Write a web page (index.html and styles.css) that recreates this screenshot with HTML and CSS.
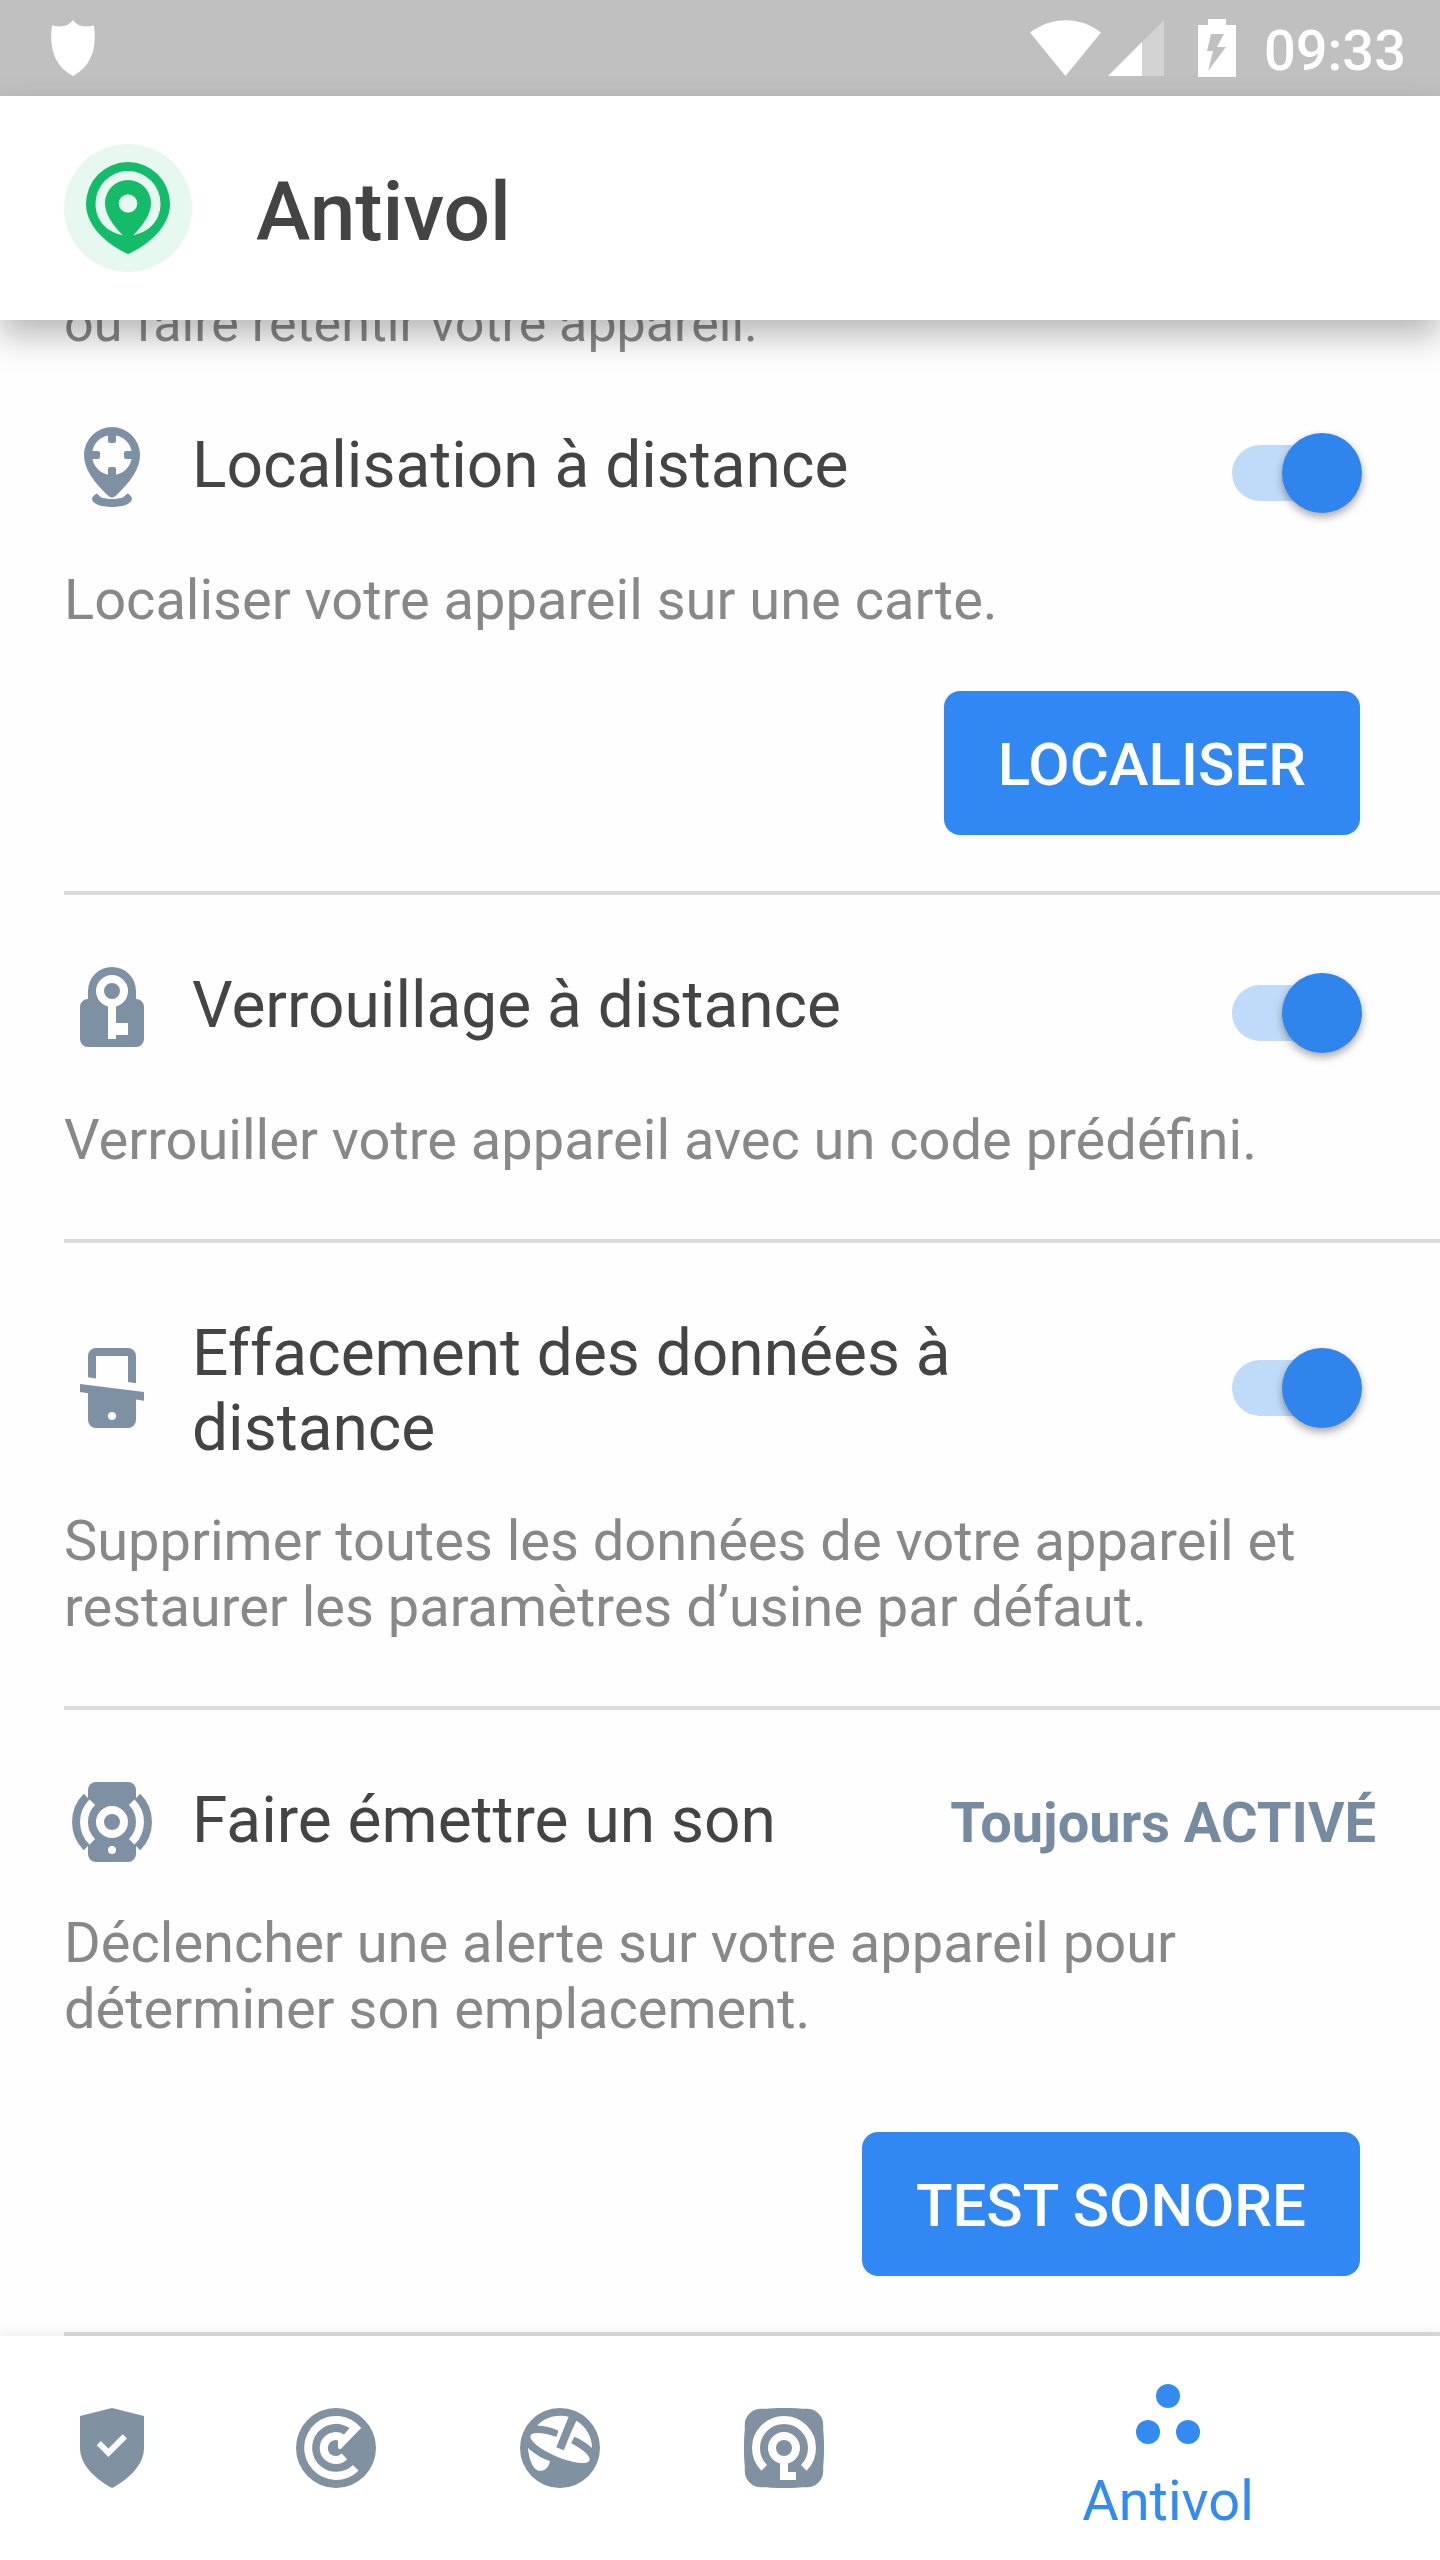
FILE: index.html
```html
<!DOCTYPE html>
<html lang="fr">
  <head>
    <meta charset="UTF-8" />
    <meta name="viewport" content="width=device-width, initial-scale=1.0" />
    <title>Antivol</title>
    <link rel="stylesheet" href="styles.css" />
  </head>
  <body>
    <div class="status-bar">
      <svg class="status-icon status-shield" width="48" height="56" viewBox="0 0 48 56">
        <path d="M24 0C28 5.500 34 8 45 5.500C48 27 43 46 24 56C5 46 0 27 3 5.500C14 8 20 5.500 24 0z" />
      </svg>
      <svg class="status-icon" width="72" height="56" viewBox="0 0 72 56">
        <path d="M0 12.500C22 -4 50 -4 71 12.500L35.500 56z" />
      </svg>
      <svg class="status-icon status-signal" width="56" height="56" viewBox="0 0 56 56">
        <path d="M0 56L56 0V56z" opacity="0.3" />
        <path d="M0 56L34 22V56z" />
      </svg>
      <svg class="status-icon status-battery" width="38" height="58" viewBox="0 0 38 58">
        <path d="M10 0h18v6h10v52H0V6h10z" />
        <path class="bolt" d="M13 15h13l-7 13h9L10 52l5-20H9z" />
      </svg>
      <span class="clock">09:33</span>
    </div>

    <header class="app-bar">
      <svg width="128" height="128" viewBox="0 0 128 128">
        <circle cx="64" cy="64" r="64" fill="#e7f8f0" />
        <path fill="#14bb68" d="M64 110C46 102 22 84 22 60A42 42 0 0 1 106 60C106 84 82 102 64 110z" />
        <path fill="#e7f8f0" d="M58.600 91.300C44 88 31.500 78 31.500 59.500A32.500 32.500 0 0 1 96.500 59.500C96.500 78 84 88 69.400 91.300C80 80 87 70 87 59A23 23 0 0 0 41 59C41 70 48 80 58.600 91.300z" />
        <circle cx="64" cy="59.500" r="9.300" fill="#e7f8f0" />
      </svg>
      <h1>Antivol</h1>
    </header>

    <main class="content">
      <p class="intro">ou faire retentir votre appareil.</p>

      <section class="feature">
        <div class="feature-head">
          <label class="feature-name" for="locate">
            <svg class="icon" viewBox="0 0 24 24">
              <path fill-rule="evenodd" d="M12 2a7 7 0 0 0-7 7c0 3.500 2.400 6.800 6.200 10.300q.8.700 1.600 0C16.600 15.800 19 12.500 19 9a7 7 0 0 0-7-7zm0 2a5 5 0 1 1 0 10 5 5 0 0 1 0-10z" />
              <path d="M11 3.500h2v2q0 .5-.5.5h-1q-.5 0-.5-.5zM11 14.500h2v-2q0-.5-.5-.5h-1q-.5 0-.5.500zM6.500 8v2h2q.5 0 .5-.5v-1q0-.5-.5-.5zM17.500 8v2h-2q-.5 0-.5-.5v-1q0-.5.5-.5z" />
              <path d="M8.200 18.600C7.500 19 7 19.500 7 20c0 1.100 2.200 2 5 2s5-.9 5-2c0-.5-.4-1-1.100-1.400l-1.200 1c-.7.200-1.700.4-2.700.4s-2-.2-2.700-.4z" />
            </svg>
            <span class="feature-title">Localisation à distance</span>
          </label>
          <input class="switch" type="checkbox" role="switch" id="locate" checked />
        </div>
        <p class="feature-text">Localiser votre appareil sur une carte.</p>
        <button class="action">LOCALISER</button>
      </section>

      <section class="feature">
        <div class="feature-head">
          <label class="feature-name" for="lock">
            <svg class="icon" viewBox="0 0 24 24">
              <path d="M6 10V8a6 6 0 0 1 12 0v2a2 2 0 0 1 2 2v8a2 2 0 0 1-2 2H6a2 2 0 0 1-2-2v-8a2 2 0 0 1 2-2z" />
              <circle class="cut-line" cx="12" cy="8" r="3" />
              <path class="cut" d="M11 11.500h2V16h3v3h-3v1h-2z" />
            </svg>
            <span class="feature-title">Verrouillage à distance</span>
          </label>
          <input class="switch" type="checkbox" role="switch" id="lock" checked />
        </div>
        <p class="feature-text">Verrouiller votre appareil avec un code prédéfini.</p>
      </section>

      <section class="feature">
        <div class="feature-head">
          <label class="feature-name" for="wipe">
            <svg class="icon" viewBox="0 0 24 24">
              <path d="M6 9.300V4a2 2 0 0 1 2-2h8a2 2 0 0 1 2 2v6.800l-2-.3V4H8v5.600z" />
              <path d="M4 11l16 2v2.200l-2-.3V20a2 2 0 0 1-2 2H8a2 2 0 0 1-2-2v-6.700L4 13z" />
              <circle class="cut" cx="12" cy="19" r="1" />
            </svg>
            <span class="feature-title">Effacement des données à distance</span>
          </label>
          <input class="switch" type="checkbox" role="switch" id="wipe" checked />
        </div>
        <p class="feature-text">Supprimer toutes les données de votre appareil et restaurer les paramètres d’usine par défaut.</p>
      </section>

      <section class="feature">
        <div class="feature-head">
          <div class="feature-name">
            <svg class="icon" viewBox="0 0 24 24">
              <rect x="6" y="2" width="12" height="20" rx="2" />
              <path class="cut-line" d="M7.050 7.050a7 7 0 0 0 0 9.900M16.950 7.050a7 7 0 0 1 0 9.900" />
              <path class="line" d="M5.640 5.640a9 9 0 0 0 0 12.720M18.360 5.640a9 9 0 0 1 0 12.720" />
              <circle class="cut-line" cx="12" cy="12" r="3" />
              <circle class="cut" cx="12" cy="19" r="1" />
            </svg>
            <h2 class="feature-title">Faire émettre un son</h2>
          </div>
          <strong class="feature-state">Toujours ACTIVÉ</strong>
        </div>
        <p class="feature-text">Déclencher une alerte sur votre appareil pour déterminer son emplacement.</p>
        <button class="action action-low">TEST SONORE</button>
      </section>
    </main>

    <nav class="tabs">
      <a class="tab" href="#protection" aria-label="Protection">
        <svg class="icon" viewBox="0 0 24 24">
          <path d="M12 2l8 2v8c0 4-3.500 7.600-8 10-4.500-2.400-8-6-8-10V4z" />
          <path class="cut-line check" d="M8.700 10.800l2.400 2.400 4.100-4.100" />
        </svg>
      </a>
      <a class="tab" href="#analyse" aria-label="Analyse">
        <svg class="icon" viewBox="0 0 24 24">
          <circle cx="12" cy="12" r="10" />
          <path class="cut" d="M17.660 17.660A8 8 0 1 1 18.300 7L13.300 12.100Q12.900 12.400 12.500 12V10.100A2 2 0 1 0 13.400 13.400L14.800 14.800A4 4 0 1 1 14 8.600L15.400 7A6 6 0 1 0 16.240 16.240z" />
        </svg>
      </a>
      <a class="tab" href="#web" aria-label="Web">
        <svg class="icon" viewBox="0 0 24 24">
          <circle cx="12" cy="12" r="10" />
          <ellipse class="cut" cx="12" cy="12" rx="8" ry="2.300" transform="rotate(23 12 12)" />
          <path class="cut" d="M6.300 6.400A8 8 0 0 1 14.200 4.200L12 10 11 9.600 11.600 7.700Q9 6.500 6.300 6.400zM16.100 5.200A8 8 0 0 1 20 12Q18 10.200 15.600 9.200L14.700 11 13 11.500z" />
          <path class="line" d="M15.200 4.400L12 12.200" />
          <path class="cut" d="M4 12C6 13.800 7.600 14.600 9.500 15.300C9.200 16.800 8.300 17.700 7 17.700C5.200 17.700 4.200 14.600 4 12z" />
        </svg>
      </a>
      <a class="tab" href="#comptes" aria-label="Comptes">
        <svg class="icon" viewBox="0 0 24 24">
          <path d="M2 12C2 3.500 3.500 2 12 2s10 1.500 10 10-1.500 10-10 10S2 20.500 2 12z" />
          <rect x="2.200" y="2.200" width="19.600" height="19.600" rx="4" />
          <path class="cut-line" d="M7.050 16.950a7 7 0 1 1 9.900 0" />
          <circle class="cut-line" cx="12" cy="12" r="3" />
          <path class="cut" d="M11 15.500h2V18h2v2h-4z" />
        </svg>
      </a>
      <a class="tab tab-active" href="#antivol" aria-current="page">
        <svg class="icon" viewBox="0 0 24 24">
          <circle cx="12" cy="6" r="3" />
          <circle cx="7" cy="15" r="3" />
          <circle cx="17" cy="15" r="3" />
        </svg>
        <span>Antivol</span>
      </a>
    </nav>
  </body>
</html>
```

FILE: styles.css
```css
* {
  box-sizing: border-box;
  margin: 0;
  padding: 0;
}

body {
  font-family: Roboto, sans-serif;
  font-size: 56px;
  line-height: 66px;
  background: #fefefe;
  color: #888;
  height: 100vh;
  display: flex;
  flex-direction: column;
}

svg {
  display: block;
  flex-shrink: 0;
}

/* status bar */
.status-bar {
  display: flex;
  align-items: center;
  height: 96px;
  padding: 0 34px 0 49px;
  background: #c0c0c0;
  color: #fff;
  flex-shrink: 0;
}

.status-icon {
  fill: #fff;
}

.status-shield {
  margin-right: auto;
}

.status-signal {
  margin-left: 6px;
}

.status-battery {
  margin: 0 28px 0 34px;
}

.bolt {
  fill: #c0c0c0;
}

.clock {
  font-weight: 500;
  padding-top: 6px;
}

/* app bar */
.app-bar {
  display: flex;
  align-items: center;
  gap: 64px;
  height: 224px;
  padding: 0 64px;
  background: #fff;
  box-shadow: 0 16px 32px rgba(0, 0, 0, 0.28);
  flex-shrink: 0;
  z-index: 1;
}

h1 {
  font-size: 82px;
  font-weight: 500;
  line-height: 94px;
  padding-top: 8px;
  color: #444;
}

/* scrolled to its end, so the top is cut off under the app bar */
.content {
  flex: 1;
  min-height: 0;
  display: flex;
  flex-direction: column;
  justify-content: flex-end;
  overflow: hidden;
}

.intro {
  padding: 0 64px;
  font-size: 52px;
  line-height: 62px;
}

.feature {
  display: flex;
  flex-direction: column;
  margin-left: 64px;
  padding: 64px 64px 66px 0;
  border-bottom: 4px solid #dcdcdc;
}

.feature:has(.action) {
  padding-bottom: 56px;
}

.feature-head {
  display: flex;
  justify-content: space-between;
  align-items: flex-start;
  margin-bottom: 40px;
}

.feature-name {
  display: flex;
  align-items: center;
  gap: 32px;
}

.feature-title {
  align-self: flex-start;
  padding: 9px 0 2px;
  font-size: 64px;
  font-weight: 400;
  line-height: 75px;
  color: #444;
}

.feature-state {
  padding-top: 16px;
  font-weight: 700;
  color: #768ba2;
}

.icon {
  width: 96px;
  height: 96px;
  fill: #7e90a4;
}

.line,
.cut-line {
  fill: none;
  stroke: #7e90a4;
  stroke-width: 2;
}

.cut-line {
  stroke: #fff;
}

.cut {
  fill: #fff;
}

.check {
  stroke-width: 1.5;
}

/* switch */
.switch {
  appearance: none;
  position: relative;
  align-self: center;
  flex-shrink: 0;
  width: 128px;
  height: 56px;
  margin: 26px 16px 26px 48px;
  border-radius: 28px;
  background: #d0d0d0;
}

.switch::before {
  content: "";
  position: absolute;
  top: -12px;
  left: -2px;
  width: 80px;
  height: 80px;
  border-radius: 50%;
  background: #fff;
  box-shadow: 0 4px 8px rgba(0, 0, 0, 0.35);
}

.switch:checked {
  background: #c0dbf9;
}

.switch:checked::before {
  left: 50px;
  background: #3085ec;
}

/* buttons */
.action {
  align-self: flex-end;
  height: 144px;
  margin: 58px 16px 0 0;
  padding: 4px 54px 0;
  border: none;
  border-radius: 16px;
  background: #3188f2;
  color: #fff;
  font: inherit;
  font-size: 60px;
  font-weight: 500;
  cursor: pointer;
}

.action-low {
  margin-top: 90px;
}

/* bottom tabs */
.tabs {
  display: flex;
  height: 224px;
  background: #fff;
  box-shadow: 0 0 16px rgba(0, 0, 0, 0.1);
  flex-shrink: 0;
  z-index: 1;
}

.tab {
  flex: 7;
  display: flex;
  flex-direction: column;
  align-items: center;
  justify-content: center;
  color: #338bef;
  text-decoration: none;
}

.tab .icon {
  fill: #8091a2;
}

.tab .line {
  stroke: #8091a2;
}

.tab-active {
  flex: 17;
  padding-top: 10px;
}

.tab-active .icon {
  fill: #338bef;
}
```
